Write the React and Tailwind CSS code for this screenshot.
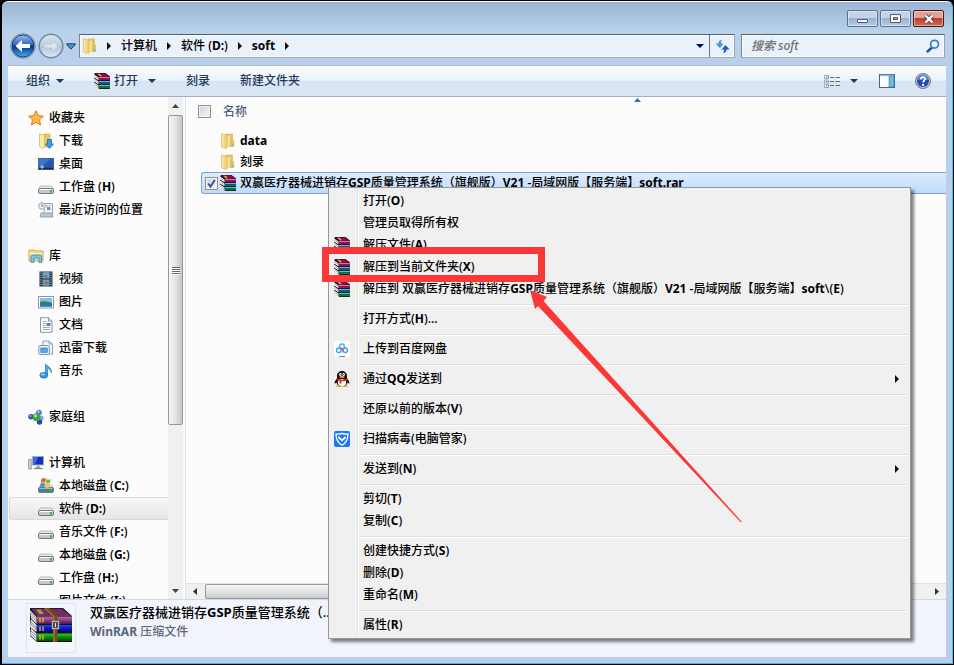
import React, { useState } from 'react'

const ARCHIVE = '双赢医疗器械进销存GSP质量管理系统（旗舰版）V21 -局域网版【服务端】soft'

// Latin runs are set heavier than the Chinese text around them
function Label({ children }) {
  return (
    <span>
      {children.split(/([A-Za-z0-9][A-Za-z0-9.:]*)/).map((part, i) =>
        i % 2 ? <span key={i} className="font-bold">{part}</span> : part
      )}
    </span>
  )
}

// ── Icons ────────────────────────────────────────────────────────────────────

function WinRarIcon() {
  return (
    <svg className="size-4 shrink-0" viewBox="0 0 16 16" aria-hidden="true">
      <path d="M1 0h10.500L16 3.500V16H5.500L0 12V2z" fill="#1c1418" />
      <path d="M1.500.5h9.500L15 3.800H5z" fill="#8c1048" />
      <path d="M3.500.8h2l2.500 2.500H6z" fill="#e0c040" />
      <path d="M5 4h11v1H5z" fill="#e868b0" />
      <path d="M5 5h11v2H5z" fill="#98104c" />
      <path d="M5 8h11v1.200H5z" fill="#58b8f0" />
      <path d="M5 9.200h11v2H5z" fill="#1058a0" />
      <path d="M5 12h11v1.200H5z" fill="#40d890" />
      <path d="M5 13.200h11v2H5z" fill="#087848" />
      <path d="M0 1.500l4.500 3v2.800L0 4.500zM0 5.500l4.500 3v2.800L0 8.500zM0 9.500l4.500 3v2.800L0 12.300z" fill="#fff" />
      <path d="M.5 3.200l4 2.600M.5 7.200l4 2.600M.5 11.200l4 2.600" stroke="#666" strokeWidth=".5" />
    </svg>
  )
}

function WinRarLarge() {
  return (
    <svg className="h-[34px] w-[42px]" viewBox="0 0 42 34" aria-hidden="true">
      <defs>
        <linearGradient id="book1" x2="0" y2="1">
          <stop stopColor="#b070a8" /><stop offset=".4" stopColor="#96488c" /><stop offset="1" stopColor="#4a1848" />
        </linearGradient>
        <linearGradient id="book2" x2="0" y2="1">
          <stop stopColor="#2848e8" /><stop offset=".4" stopColor="#0c18d0" /><stop offset="1" stopColor="#080850" />
        </linearGradient>
        <linearGradient id="book3" x2="0" y2="1">
          <stop stopColor="#30c830" /><stop offset=".4" stopColor="#0c980c" /><stop offset="1" stopColor="#054805" />
        </linearGradient>
      </defs>
      <path d="M0 0h33l9 8v26H7L0 28z" fill="#141014" />
      <path d="M1 .7h31l9 7.300H7z" fill="#6c3064" />
      <path d="M0 2l6.500 7v7L1 10zM1 11l5.500 6v7L0 19zM1 20l5.500 5.500v7.500L0 27z" fill="#e8e4ec" />
      <path d="M1 5l5.500 6M1 7.500l5.500 6M1 14l5.500 6M1 16.500l5.500 5M1 23l5.500 5M1 25.500l5.500 5" stroke="#77707c" strokeWidth=".7" />
      <path d="M7 8.500h35V16H7z" fill="url(#book1)" />
      <path d="M7 17h35v7.500H7z" fill="url(#book2)" />
      <path d="M7 25.500h35V33H7z" fill="url(#book3)" />
      <path d="M6 1.500h4.500L14 6H9.500z" fill="#b89828" />
      <path d="M10 10v4.500M13 10v4.500M10 18.500V23M13 18.500V23M10 27v4.500M13 27v4.500" stroke="#f0d020" strokeWidth="1.200" />
      <path d="M14 0h5l8.500 8v26H23V9z" fill="#7c481c" />
      <path d="M15 .3l9 8.500v25" fill="none" stroke="#b88450" />
      <rect x="22.500" y="13.500" width="6" height="7" fill="#333" stroke="#b8b8a8" strokeWidth="1.400" />
      <path d="M25.500 15v4" stroke="#eee" strokeWidth="1.200" />
    </svg>
  )
}

function FolderIcon() {
  return (
    <svg className="size-4 shrink-0" viewBox="0 0 16 16" aria-hidden="true">
      <defs>
        <linearGradient id="fold" x2="1">
          <stop stopColor="#fdf0b4" /><stop offset="1" stopColor="#e2bd50" />
        </linearGradient>
      </defs>
      <path d="M6 1h6.500v12.500H6z" fill="#e3c164" stroke="#d6b252" strokeWidth=".6" />
      <path d="M12 7.500h1.700v6H11z" fill="#ecd083" stroke="#d0aa48" strokeWidth=".6" />
      <path d="M12.800 10.500v2.500" stroke="#50b0e0" />
      <path d="M1.500.8l5 1.200L8 4v9.500l-1.800 2L1.500 14z" fill="url(#fold)" stroke="#dcbc5e" strokeWidth=".7" />
      <path d="M8 2.500h2v11.500H7.500V4z" fill="#f5e09a" />
    </svg>
  )
}

function DriveIcon({ windows }) {
  return (
    <svg className="size-4 shrink-0" viewBox="0 0 16 16" aria-hidden="true">
      <path d="M2.500 7h11l2 3.500H.5z" fill="#eceef0" stroke="#a6a8ac" strokeWidth=".8" />
      <rect x=".5" y="9.500" width="15" height="5" rx="1.500" fill={windows ? '#4a7c98' : '#c6c9cc'} stroke="#75787d" />
      <path d="M1.500 10.500h13" stroke={windows ? '#8fc0d4' : '#fff'} />
      <rect x="12" y="11" width="2" height="2.500" fill="#35b535" />
      {windows && (
        <>
          <path d="M3.500.8q2.200-1.500 4.300 0L7.200 4.800q-2.200-1-4.400 0z" fill="#e8622c" />
          <path d="M8.300 1.100q2.200 1.200 4.300 0L12 5.100q-2.200 1-4.300 0z" fill="#7cbc3c" />
          <path d="M2.600 5.300q2.200-1 4.400 0l-.7 4q-2.200-1-4.300 0z" fill="#4090e0" />
          <path d="M7.500 5.600q2.200 1 4.400 0l-.7 4q-2.200.8-4.300 0z" fill="#f8c830" />
        </>
      )}
    </svg>
  )
}

const ICONS = {
  star: (
    <path d="M8 .8l2.200 4.800 5.200.6-3.900 3.500 1.100 5.200L8 12.300l-4.600 2.600 1.100-5.200L.6 6.200l5.200-.6z" fill="#fdb84a" stroke="#e2761c" strokeLinejoin="round" />
  ),
  download: (
    <>
      <path d="M6 1h6v13H6z" fill="#e6c766" stroke="#cfaa48" strokeWidth=".6" />
      <path d="M1.500.8l5 1.400V14l-2 1-3-1.200z" fill="#fbe9a8" stroke="#d4b14e" strokeWidth=".7" />
      <path d="M9.500 6.500h4V11h2l-4 4.500-4-4.500h2z" fill="#38a0e8" stroke="#1468b8" strokeWidth=".8" />
    </>
  ),
  desktop: (
    <>
      <rect x=".5" y="2.500" width="15" height="11" fill="#2458b8" stroke="#50627c" />
      <path d="M1 3h11L4 11H1z" fill="#3c74cc" />
      <path d="M1 12.500h14" stroke="#182848" strokeWidth="1.500" />
      <path d="M2 11l2-2 2 2-2 2z" fill="#78d0e8" />
      <path d="M4 11h1.500" stroke="#f8c030" />
    </>
  ),
  recent: (
    <>
      <path d="M6 1.500h8.500v10H6z" fill="#f2f5f8" stroke="#9aa6b0" />
      <path d="M8 4h2M11 4h2M9 7h4" stroke="#8ca4b8" />
      <rect x="9" y="5" width="3" height="3" fill="#48a0e0" />
      <path d="M3 11l-1 4h13l-1-4z" fill="#c0c6ca" stroke="#899096" strokeWidth=".8" />
      <circle cx="4" cy="4" r="3.300" fill="#eef3f7" stroke="#98a4ae" />
      <path d="M4 2v2.200h1.800" stroke="#56707f" fill="none" strokeWidth=".8" />
    </>
  ),
  library: (
    <>
      <path d="M1 2h5l1 1h8v10H1z" fill="#f4dc88" stroke="#c9a74a" />
      <path d="M1.500 5.500h13" stroke="#fff5cc" />
      <path d="M3 14.500V9q0-2 2-2h6.500q2 0 2 2v5.500H11V10H6v4.500z" fill="#7cc8ec" stroke="#3888bc" strokeWidth=".8" />
    </>
  ),
  video: (
    <>
      <rect x="1.500" y=".5" width="13" height="15" fill="#2a3038" />
      <rect x="4.500" y="1.200" width="7" height="6.300" fill="#58b4e4" />
      <rect x="4.500" y="8.500" width="7" height="6.300" fill="#50a8e0" />
      <path d="M5 5l3-2 2 3-2 1.500zM5 12l3-2 3 2-2 2z" fill="#b86848" />
      <path d="M3 1.500v13M13 1.500v13" stroke="#e4e8ec" strokeDasharray="1 1.300" />
    </>
  ),
  picture: (
    <>
      <rect x=".5" y="2.500" width="15" height="11.500" fill="#fff" stroke="#8c949c" />
      <rect x="2" y="4" width="12" height="8.500" fill="#78c4f0" />
      <path d="M2 8q5-2 12 1v3.500H2z" fill="#387c58" />
      <path d="M2 11.500q6-2.500 12-.5v1.500H2z" fill="#2c78b8" />
    </>
  ),
  document: (
    <>
      <path d="M2.500.7h8L14 4v11.300H2.500z" fill="#fff" stroke="#8c949c" />
      <path d="M10.500.7V4H14" fill="#e4e8ec" stroke="#8c949c" />
      <path d="M4.500 4.500h4M4.500 6.500h3M4.500 8.500h3M4.500 10.500h7.500M4.500 12.500h7.500" stroke="#98a0c0" strokeWidth=".9" />
      <rect x="8.500" y="6" width="4" height="3" fill="#3888d8" />
    </>
  ),
  thunder: (
    <>
      <path d="M5 1h6l3.500 3v10H5z" fill="#f4f8fc" stroke="#88a0b4" />
      <path d="M11 1v3h3.500" fill="none" stroke="#88a0b4" />
      <rect x=".8" y="5.500" width="10.500" height="9" rx="1" fill="#e4f0fa" stroke="#7898b8" />
      <rect x="2.800" y="8" width="6.500" height="4.500" fill="#54a4e4" stroke="#3478b8" strokeWidth=".6" />
    </>
  ),
  music: (
    <>
      <path d="M7.500 12V.8c.5 2 7 3.500 5.800 9-.5-2.500-2-4-3.800-4.500V12z" fill="#48a8e8" stroke="#2080c8" strokeWidth=".7" />
      <ellipse cx="5.800" cy="12.300" rx="4" ry="3" fill="#2c94e0" stroke="#1c70b8" strokeWidth=".6" />
      <ellipse cx="5" cy="11.500" rx="2" ry="1" fill="#90d4f8" />
    </>
  ),
  homegroup: (
    <>
      <circle cx="11" cy="3.600" r="2.900" fill="#5c7cdc" />
      <circle cx="3" cy="7.800" r="2.700" fill="#3450b8" />
      <circle cx="13.200" cy="9" r="2.500" fill="#8ca4ec" />
      <circle cx="11.500" cy="13" r="2.700" fill="#2c44a8" />
      <circle cx="8.500" cy="8.200" r="3.900" fill="#38a838" />
      <circle cx="7.500" cy="6.800" r="1.500" fill="#a8e898" />
      <circle cx="10.500" cy="2.800" r="1" fill="#d4e0fc" />
      <circle cx="2.500" cy="7" r=".9" fill="#a8bcf4" />
    </>
  ),
  computer: (
    <>
      <path d="M.7 4.500h2.600v9.500H.7z" fill="#d4d8dc" stroke="#80868c" strokeWidth=".8" />
      <rect x="4.500" y="1.500" width="11" height="8.500" fill="#1430c0" stroke="#a4acb4" />
      <path d="M5 2h5L7 9.500H5z" fill="#4068dc" />
      <path d="M9 10.500h2.500l1 2.500h-5z" fill="#a4acb4" />
      <path d="M6 13.500h8.500" stroke="#788088" strokeWidth="1.200" />
    </>
  ),
  baidu: (
    <>
      <rect width="16" height="16" rx="3" fill="#fff" />
      <g fill="none" strokeWidth="1.500">
        <circle cx="8" cy="5.500" r="2.400" stroke="#48b8f0" />
        <circle cx="4.800" cy="9.200" r="2.300" stroke="#38a8f0" />
        <circle cx="11.200" cy="9.200" r="2.300" stroke="#38a8f0" />
        <path d="M6.300 7.200q2-.5 3.300 3" stroke="#f05068" />
      </g>
      <path d="M5 15.500h3" stroke="#38a8f0" />
      <path d="M8 15.500h3" stroke="#f04860" />
    </>
  ),
  qq: (
    <>
      <path d="M3 5C3 2 5.200 0 8 0s5 2 5 5v2.500c1.500 1.500 2.700 3.500 2.300 5-.6.300-1.200-.5-1.800-1.200 0 2.500-2 4-5.500 4s-5.500-1.500-5.500-4c-.6.700-1.200 1.500-1.800 1.200-.4-1.500.8-3.500 2.300-5z" fill="#111" />
      <ellipse cx="8" cy="11.500" rx="4.200" ry="3.500" fill="#fff" />
      <ellipse cx="6.400" cy="3.400" rx="1.200" ry="1.600" fill="#fff" />
      <ellipse cx="9.600" cy="3.400" rx="1.200" ry="1.600" fill="#fff" />
      <circle cx="6.800" cy="3.600" r=".5" /><circle cx="9.200" cy="3.600" r=".5" />
      <ellipse cx="8" cy="6" rx="2.700" ry=".9" fill="#f8a818" />
      <path d="M2.500 7.300q5.500 2.700 11 0v1.900Q10.500 10.500 7.500 10v2.500h-2V9.800Q4 9.500 2.500 9z" fill="#e82020" />
      <path d="M2 14.700h4.500V16H2zM9.500 14.700H14V16H9.500z" fill="#f8a818" />
    </>
  ),
  shield: (
    <>
      <rect width="16" height="16" rx="2" fill="#1c78f4" />
      <path d="M8 2.300q3 1.200 6 .7Q14 11 8 14.200 2 11 2 3q3 .5 6-.7z" fill="none" stroke="#fff" strokeWidth="1.300" />
      <path d="M4.300 6L8 9.300 11.700 6" fill="none" stroke="#fff" strokeWidth="1.700" />
    </>
  ),
}

function Icon({ name }) {
  if (name === 'rar') return <WinRarIcon />
  if (name === 'folder') return <FolderIcon />
  if (name === 'drive') return <DriveIcon />
  if (name === 'system') return <DriveIcon windows />
  return (
    <svg className="size-4 shrink-0" viewBox="0 0 16 16" aria-hidden="true">
      {ICONS[name]}
    </svg>
  )
}

function Caret({ className = 'text-[#1e395b]' }) {
  return (
    <svg className={`h-1 w-2 shrink-0 ${className}`} viewBox="0 0 8 4" fill="currentColor" aria-hidden="true">
      <path d="M0 0h8L4 4z" />
    </svg>
  )
}

function RightArrow() {
  return (
    <svg className="h-2 w-1 shrink-0" viewBox="0 0 4 8" fill="#111" aria-hidden="true">
      <path d="M0 0l4 4-4 4z" />
    </svg>
  )
}

// ── Window frame ─────────────────────────────────────────────────────────────

function CaptionButton({ label, close, children }) {
  return (
    <button
      aria-label={label}
      className={`flex h-[17px] w-[31px] items-center justify-center rounded-[2px] border shadow-[inset_0_0_0_1px_rgba(255,255,255,0.45)] ${
        close
          ? 'border-[#4a1418] bg-linear-to-b from-[#e2a197] from-45% via-[#bd3d27] via-50% to-[#cf6b51]'
          : 'border-[#59708f] bg-linear-to-b from-[#c0d3e9] from-45% via-[#98b3d2] via-50% to-[#b4cbe4]'
      }`}
    >
      {children}
    </button>
  )
}

function TitleBar() {
  return (
    <div className="flex h-[31px] shrink-0 items-end justify-end gap-[2px] pr-[2px] pb-[6px]">
      <CaptionButton label="最小化">
        <span className="mt-1 h-1 w-[11px] rounded-[1px] border border-[#535666] bg-white" />
      </CaptionButton>
      <CaptionButton label="最大化">
        <span className="flex h-[9px] w-[11px] items-center justify-center rounded-[1px] border border-[#535666] bg-white">
          <span className="h-[3px] w-[5px] border border-[#535666] bg-[#9bb4d2]" />
        </span>
      </CaptionButton>
      <CaptionButton label="关闭" close>
        <svg className="h-[10px] w-3" viewBox="0 0 12 10" aria-hidden="true">
          <path d="M2.500 1.500l7 7M9.500 1.500l-7 7" stroke="#5c4650" strokeWidth="4.200" />
          <path d="M2.500 1.500l7 7M9.500 1.500l-7 7" stroke="#fff" strokeWidth="2.400" />
        </svg>
      </CaptionButton>
    </div>
  )
}

function HistoryButtons() {
  return (
    <div className="flex w-[71px] shrink-0 items-center pl-[2px]">
      <button aria-label="后退">
        <svg className="size-[26px]" viewBox="0 0 26 26" aria-hidden="true">
          <defs>
            <linearGradient id="orb" x2="0" y2="1">
              <stop stopColor="#9cbcec" /><stop offset=".45" stopColor="#3064c0" />
              <stop offset=".5" stopColor="#0c2c84" /><stop offset="1" stopColor="#38b4f4" />
            </linearGradient>
          </defs>
          <circle cx="13" cy="13" r="12.300" fill="#c8d8e8" stroke="#7084a0" />
          <circle cx="13" cy="13" r="11" fill="url(#orb)" stroke="#183878" />
          <path d="M5.500 13l6.500-6v4h8v4h-8v4z" fill="#fff" />
        </svg>
      </button>
      <button aria-label="前进" className="ml-[2px]">
        <svg className="size-[26px]" viewBox="0 0 26 26" aria-hidden="true">
          <defs>
            <linearGradient id="orbOff" x2="0" y2="1">
              <stop stopColor="#d8e4f0" /><stop offset=".48" stopColor="#c0cfe0" />
              <stop offset=".5" stopColor="#b2c4d8" /><stop offset="1" stopColor="#dcebf6" />
            </linearGradient>
          </defs>
          <circle cx="13" cy="13" r="11.800" fill="url(#orbOff)" stroke="#7488a4" strokeWidth="1.500" />
          <path d="M20.500 13L14 7v4H6v4h8v4z" fill="#dae4ee" stroke="#b2c2d4" strokeWidth=".7" />
        </svg>
      </button>
      <button aria-label="最近浏览的位置" className="ml-[2px]">
        <svg className="h-[7px] w-[10px]" viewBox="0 0 10 7" aria-hidden="true">
          <path d="M.8.800h8.400v1L5 6.200.8 1.800z" fill="#4c94c8" stroke="#1c3c6c" />
        </svg>
      </button>
    </div>
  )
}

function AddressBar() {
  return (
    <div className="flex h-8 shrink-0 items-start pr-px">
      <div className="flex h-[26px] items-center">
        <HistoryButtons />
      </div>
      <nav className="mt-px flex h-6 min-w-0 flex-1 items-center border border-t-[#565d64] border-r-[#9aa4b0] border-b-[#a0a8b2] border-l-[#7b8490] bg-[#e9f1fa] pl-[2px] text-black shadow-[inset_0_0_0_1px_#f8fbfe]">
        <Icon name="folder" />
        <div className="ml-[9px] flex flex-1 items-center gap-[10px]">
          <RightArrow />
          <a href="#computer"><Label>计算机</Label></a>
          <RightArrow />
          <a href="#d"><Label>软件 (D:)</Label></a>
          <RightArrow />
          <a href="#soft"><Label>soft</Label></a>
          <RightArrow />
        </div>
        <button aria-label="以前的位置" className="mr-[5px]">
          <Caret className="text-[#000070]" />
        </button>
        <button aria-label="刷新" className="flex h-full w-[25px] items-center justify-center border-l border-[#6a727c]">
          <svg className="size-[15px]" viewBox="0 0 15 15" aria-hidden="true">
            <path d="M7 1C4.500 1 3.500 2.500 3.500 4.500H.5L5 9l3.500-4.500H6C6 3 6 2 7 1z" fill="#3898d8" />
            <path d="M8 14c2.500 0 3.500-1.500 3.500-3.500h3L10.500 6 6.500 10.500H9c0 1.500 0 2.500-1 3.500z" fill="#1c60b0" />
          </svg>
        </button>
      </nav>
      <label className="mt-px ml-[6px] flex h-6 w-[204px] shrink-0 items-center border border-t-[#565d64] border-r-[#9aa4b0] border-b-[#a0a8b2] border-l-[#7b8490] bg-[#e9f1fa] pr-1 pl-[9px] shadow-[inset_0_0_0_1px_#f8fbfe]">
        <input
          aria-label="搜索 soft"
          placeholder="搜索 soft"
          className="min-w-0 flex-1 italic outline-none placeholder:text-[#6b7072]"
        />
        <svg className="size-[14px]" viewBox="0 0 14 14" fill="none" aria-hidden="true">
          <path d="M6 8.500L1.500 12.500" stroke="#2c50a0" strokeWidth="2.400" strokeLinecap="round" />
          <circle cx="8.500" cy="5.200" r="3.900" stroke="#3080c8" strokeWidth="1.700" fill="#f4fafe" />
        </svg>
      </label>
    </div>
  )
}

function CommandBar() {
  return (
    <div className="flex h-8 shrink-0 items-center border-t border-b border-t-[#a4bcd8] border-b-[#a0afc8] bg-linear-to-b from-[#fdfeff] via-[#e9f2fb] via-48% to-[#dae5f4] to-50% pr-[15px] pl-[18px] text-[#1e395b]">
      <button className="flex w-[68px] items-center gap-[6px]">组织 <Caret /></button>
      <button className="flex w-[92px] items-center gap-1">
        <Icon name="rar" />
        <span>打开</span>
        <span className="ml-[6px]"><Caret /></span>
      </button>
      <button className="w-[54px] text-left">刻录</button>
      <button>新建文件夹</button>
      <div className="ml-auto flex items-center">
        <button aria-label="更改视图" className="flex items-center gap-[10px]">
          <svg className="h-[13px] w-4" viewBox="0 0 16 13" fill="none" aria-hidden="true">
            <path d="M.5.500h4v3h-4zM.5 5h4v3h-4zM.5 9.500h4v3h-4z" fill="#fff" stroke="#8894a4" strokeWidth=".8" />
            <path d="M2 2h1.500" stroke="#3858a0" /><path d="M2 6.500h1.500" stroke="#d03020" /><path d="M2 11h1.500" stroke="#308050" />
            <path d="M6 2.500h4M11.500 2.500H16M6 6.500h4M11.500 6.500H16M6 10.500h4M11.500 10.500H16" stroke="#5c6c84" />
          </svg>
          <Caret />
        </button>
        <button aria-label="显示预览窗格" className="ml-[21px]">
          <svg className="block h-[14px] w-4" viewBox="0 0 16 14" aria-hidden="true">
            <rect x=".5" y=".5" width="15" height="13" fill="#fff" stroke="#4c6480" />
            <path d="M1 1.500h14" stroke="#a8bcd0" strokeWidth="1.500" />
            <rect x="10" y="2" width="5" height="11" fill="#70bcdc" stroke="#3880a8" strokeWidth=".6" />
          </svg>
        </button>
        <button aria-label="获取帮助" className="ml-5">
          <svg className="block size-4" viewBox="0 0 16 16" aria-hidden="true">
            <circle cx="8" cy="8" r="7.500" fill="#c4c8d0" stroke="#70747c" />
            <circle cx="8" cy="8" r="6" fill="#2448b4" />
            <path d="M2.500 7a5.500 5.500 0 0 1 11 0z" fill="#5c7cd8" />
            <path d="M5.800 6.300c0-3 4.600-2.800 4.400-.3C10 7.600 8.100 7.500 8.100 9.600" fill="none" stroke="#fff" strokeWidth="1.700" />
            <circle cx="8.100" cy="11.900" r="1.100" fill="#fff" />
          </svg>
        </button>
      </div>
    </div>
  )
}

// ── Navigation pane ──────────────────────────────────────────────────────────

const NAV_GROUPS = [
  {
    label: '收藏夹', icon: 'star',
    items: [['download', '下载'], ['desktop', '桌面'], ['drive', '工作盘 (H)'], ['recent', '最近访问的位置']],
  },
  {
    label: '库', icon: 'library',
    items: [['video', '视频'], ['picture', '图片'], ['document', '文档'], ['thunder', '迅雷下载'], ['music', '音乐']],
  },
  { label: '家庭组', icon: 'homegroup', items: [] },
  {
    label: '计算机', icon: 'computer',
    items: [
      ['system', '本地磁盘 (C:)'],
      ['drive', '软件 (D:)'],
      ['drive', '音乐文件 (F:)'],
      ['drive', '本地磁盘 (G:)'],
      ['drive', '工作盘 (H:)'],
      ['drive', '图片文件 (I:)'],
    ],
  },
]

function NavPane() {
  return (
    <nav className="flex w-[160px] shrink-0 flex-col gap-[23px] overflow-hidden pt-[9px] pl-px">
      {NAV_GROUPS.map(group => (
        <div key={group.label} className="shrink-0">
          <a href={`#${group.label}`} className="flex h-[23px] items-center gap-[5px] pl-[19px]">
            <Icon name={group.icon} />
            <Label>{group.label}</Label>
          </a>
          {group.items.map(([icon, label]) => (
            <a
              key={label}
              href={`#${label}`}
              className={`flex h-[23px] items-center gap-[5px] rounded-l-[3px] border border-r-0 pl-7 ${
                label === '软件 (D:)'
                  ? 'border-[#d9d9d9] bg-linear-to-b from-[#f8f8f8] to-[#e6e6e6]'
                  : 'border-transparent'
              }`}
            >
              <Icon name={icon} />
              <Label>{label}</Label>
            </a>
          ))}
        </div>
      ))}
    </nav>
  )
}

function VerticalScrollbar() {
  return (
    <div className="flex w-[15px] shrink-0 flex-col items-center bg-[#f0f0f0]">
      <div className="flex h-[18px] items-center">
        <svg className="h-1 w-[7px]" viewBox="0 0 7 4" aria-hidden="true"><path d="M3.500 0L7 4H0z" fill="#444" /></svg>
      </div>
      <div className="flex h-[310px] w-[15px] flex-col items-center justify-center gap-px rounded-[2px] border border-[#979797] bg-linear-to-r from-[#f5f5f5] via-[#e4e4e4] via-50% to-[#c4c5c8]">
        {[0, 1, 2, 3].map(i => (
          <span key={i} className="h-px w-2 bg-[#666] shadow-[0_1px_0_#fff]" />
        ))}
      </div>
      <div className="mt-auto flex h-[17px] items-center">
        <svg className="h-1 w-[7px]" viewBox="0 0 7 4" aria-hidden="true"><path d="M0 0h7L3.500 4z" fill="#444" /></svg>
      </div>
    </div>
  )
}

// ── File list ────────────────────────────────────────────────────────────────

function TickBox({ label, checked, onChange }) {
  return (
    <span className="grid size-[13px] shrink-0">
      <input
        type="checkbox"
        aria-label={label}
        checked={checked}
        onChange={e => onChange(e.target.checked)}
        className="col-start-1 row-start-1 size-[13px] appearance-none border border-[#8e8f8f] bg-linear-to-br from-[#cfd3d8] to-[#f6f6f6] shadow-[inset_0_0_0_1px_#f4f4f4]"
      />
      {checked && (
        <svg className="pointer-events-none col-start-1 row-start-1 size-[13px]" viewBox="0 0 13 13" fill="none" aria-hidden="true">
          <path d="M3.200 6.500l2.300 3L9.800 3" stroke="#3a4c9c" strokeWidth="1.900" />
        </svg>
      )}
    </span>
  )
}

function FileList() {
  const [all, setAll] = useState(false)
  const [picked, setPicked] = useState(true)

  return (
    <div className="flex min-w-0 flex-1 flex-col overflow-hidden border-l border-[#d6e5f5]">
      <div className="flex justify-center pt-px pl-[142px]">
        <svg className="h-1 w-[7px]" viewBox="0 0 7 4" aria-hidden="true"><path d="M3.500 0L7 4H0z" fill="#3c6c98" /></svg>
      </div>
      <div className="flex h-[19px] items-center gap-3 pl-3 text-[#4c607a]">
        <TickBox label="全选" checked={all} onChange={setAll} />
        <span>名称</span>
      </div>
      <ul className="mt-[9px] flex-1 pl-[15px]">
        {['data', '刻录'].map(name => (
          <li key={name} className="flex h-[21px] items-center gap-1 pl-[19px]">
            <Icon name="folder" />
            <Label>{name}</Label>
          </li>
        ))}
        <li className="flex h-[22px] items-center rounded-l-[3px] border border-r-0 border-[#7da2ce] bg-linear-to-b from-[#dcebfc] to-[#c1dbfc] pl-[3px] whitespace-nowrap">
          <TickBox label="选择" checked={picked} onChange={setPicked} />
          <span className="mr-1 ml-[2px]"><Icon name="rar" /></span>
          <Label>{`${ARCHIVE}.rar`}</Label>
        </li>
      </ul>
      <div className="flex h-4 shrink-0 items-center justify-between border-t border-[#e0e0e0] bg-[#f0f0f0] px-[7px]">
        <svg className="h-[7px] w-1" viewBox="0 0 4 7" aria-hidden="true"><path d="M4 0v7L0 3.500z" fill="#333" /></svg>
        <div className="mr-6 ml-2 h-[15px] flex-1 rounded-[2px] border border-[#979797] bg-linear-to-b from-[#f5f5f5] via-[#e4e4e4] via-50% to-[#c8c9cb]" />
        <svg className="h-[7px] w-1" viewBox="0 0 4 7" aria-hidden="true"><path d="M0 0l4 3.500L0 7z" fill="#333" /></svg>
      </div>
    </div>
  )
}

function DetailsPane() {
  return (
    <div className="flex h-[58px] shrink-0 border-t border-[#c8daee] bg-[#f1f5fb] pt-[3px] pl-[18px]">
      <div className="flex size-[50px] shrink-0 justify-center border border-[#dfe5ee] bg-[#f3f6fc] pt-1">
        <WinRarLarge />
      </div>
      <div className="ml-[14px] flex flex-col gap-[3px]">
        <div className="text-[13px] leading-[18px]"><Label>双赢医疗器械进销存GSP质量管理系统（...</Label></div>
        <div className="text-[#5a6779]"><Label>WinRAR 压缩文件</Label></div>
      </div>
    </div>
  )
}

// ── Context menu ─────────────────────────────────────────────────────────────

const MENU = [
  [
    { label: '打开(O)' },
    { label: '管理员取得所有权' },
    { label: '解压文件(A)', icon: 'rar' },
    { label: '解压到当前文件夹(X)', icon: 'rar' },
    { label: `解压到 ${ARCHIVE}\\(E)`, icon: 'rar' },
  ],
  [{ label: '打开方式(H)...' }],
  [{ label: '上传到百度网盘', icon: 'baidu' }],
  [{ label: '通过QQ发送到', icon: 'qq', submenu: true }],
  [{ label: '还原以前的版本(V)' }],
  [{ label: '扫描病毒(电脑管家)', icon: 'shield' }],
  [{ label: '发送到(N)', submenu: true }],
  [{ label: '剪切(T)' }, { label: '复制(C)' }],
  [{ label: '创建快捷方式(S)' }, { label: '删除(D)' }, { label: '重命名(M)' }],
  [{ label: '属性(R)' }],
]

function Gutter({ children }) {
  return (
    <span className="flex w-7 shrink-0 items-center self-stretch border-r border-white pl-[3px] shadow-[inset_-1px_0_0_#e2e3e3]">
      {children}
    </span>
  )
}

function ContextMenu() {
  return (
    <div
      role="menu"
      className="absolute top-[187px] left-[328px] w-[583px] border border-[#979797] bg-[#f0f0f0] p-[2px] shadow-[3px_3px_3px_rgba(0,0,0,0.5)]"
    >
      {MENU.map((section, i) => (
        <div key={i}>
          {i > 0 && (
            <div className="flex h-2" role="separator">
              <Gutter />
              <span className="mt-1 h-[2px] flex-1 border-t border-b border-t-[#e0e0e0] border-b-white" />
            </div>
          )}
          {section.map(item => (
            <button key={item.label} role="menuitem" className="flex h-[22px] w-full items-center pr-[9px] text-left whitespace-nowrap">
              <Gutter>{item.icon && <Icon name={item.icon} />}</Gutter>
              <span className="flex-1 pl-1"><Label>{item.label}</Label></span>
              {item.submenu && <RightArrow />}
            </button>
          ))}
        </div>
      ))}
    </div>
  )
}

function Annotation() {
  return (
    <>
      <div className="pointer-events-none absolute top-[247px] left-[322px] h-[35px] w-[223px] border-7 border-[#fb3837]" />
      <svg className="pointer-events-none absolute top-[289px] left-[530px] h-[234px] w-[212px]" viewBox="0 0 212 234" aria-hidden="true">
        <path d="M0 1l17 7-3.500 4L212 233h-1.500L8 17l-3 3z" fill="#fb3837" />
      </svg>
    </>
  )
}

// ── App ──────────────────────────────────────────────────────────────────────

export default function App() {
  return (
    <div className="relative flex h-screen flex-col overflow-hidden bg-black pt-px pr-px pb-px pl-[2px] font-['Noto_Sans','Noto_Sans_CJK_SC',sans-serif] text-xs font-medium text-black">
      <div className="flex min-h-0 flex-1 flex-col rounded-t-[6px] border-t border-r border-b border-t-white border-r-[#38c8e8] border-b-[#38b8d8] bg-[linear-gradient(#9bb4d4_0,#b9d3ea_30px,#b9cfeb_60px,#b9cfeb_100%)] pr-[6px] pb-[6px] pl-[6px]">
        <TitleBar />
        <AddressBar />
        <CommandBar />
        <div className="flex min-h-0 flex-1 bg-[#fcfcfc]">
          <NavPane />
          <VerticalScrollbar />
          <div className="w-[2px] shrink-0" />
          <FileList />
        </div>
        <DetailsPane />
      </div>
      <ContextMenu />
      <Annotation />
    </div>
  )
}
